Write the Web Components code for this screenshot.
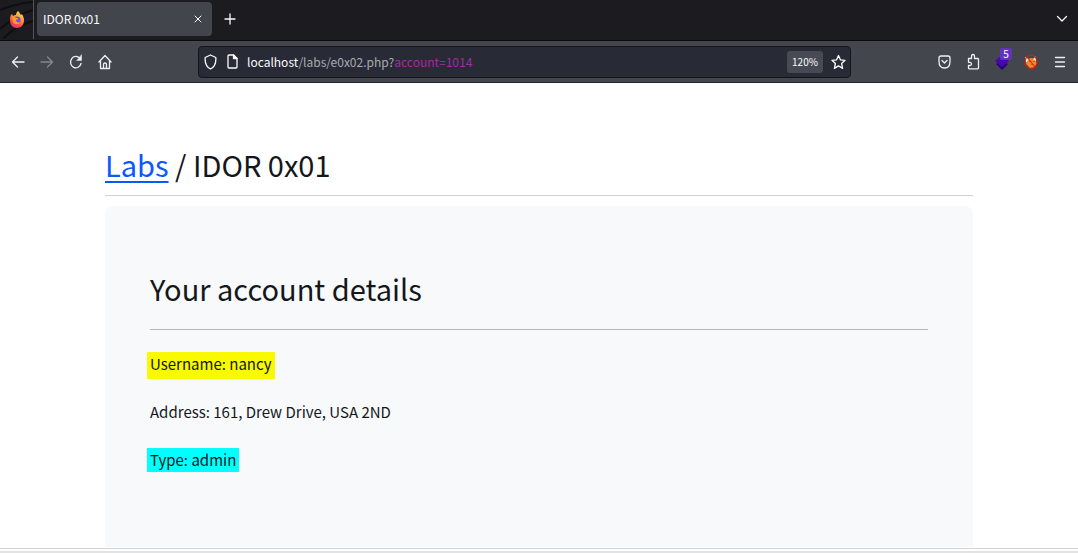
<!DOCTYPE html>
<html lang="en">
<head>
<meta charset="utf-8">
<title>IDOR 0x01</title>
<style>
  html, body { margin: 0; height: 100%; }
  body { background: #fff; color: #14171a; font-family: "Noto Sans CJK JP", "Noto Sans", sans-serif; }
</style>
</head>
<body>
<browser-window></browser-window>

<template id="icon-button-t">
  <style>
    :host { display: block; position: relative; flex: none; width: 28px; height: 30px; }
    button { display: grid; place-items: center; width: 100%; height: 100%; margin: 0; padding: 0; border: 0; background: none; color: inherit; }
    ::slotted(svg) { display: block; fill: none; stroke: currentColor; stroke-width: 1.3; stroke-linecap: round; stroke-linejoin: round; }
    .badge { position: absolute; left: 12px; top: 1px; width: 12px; height: 12px; border-radius: 2px; background: #6433bd; color: #fff; font-size: 10px; line-height: 12px; text-align: center; }
    .badge:empty { display: none; }
  </style>
  <button type="button"><slot></slot></button><span class="badge"></span>
</template>

<template id="tab-strip-t">
  <style>
    :host { display: flex; align-items: center; height: 38px; padding-bottom: 2px; border-bottom: 1px solid #0b0b0e; background: #1b1b20; color: #fbfbfe; }
    .pinned { position: relative; display: grid; place-items: center; width: 33px; height: 40px; border-right: 1px solid #55565c; }
    .tab { display: flex; align-items: center; justify-content: space-between; box-sizing: border-box; width: 175px; height: 34px; margin-left: 3px; padding-left: 6px; border-radius: 4px; background: #42454c; font-size: 12px; line-height: 20px; }
    .grow { flex: 1; }
    .new { margin-left: 4px; }
    .list { margin-right: 2px; }
    .swirl { position: absolute; left: 0; top: 0; }
    .logo { position: relative; }
  </style>
  <div class="pinned">
    <svg class="swirl" width="33" height="40" fill="none" stroke="#0f0f12" stroke-width="2"><path d="M0 11Q18 4 33 3M0 30Q16 16 33 11M3 40Q15 27 33 22"/></svg>
    <svg class="logo" width="14" height="17" viewBox="0 0 14 17">
      <defs><linearGradient id="f" x1=".8" y1="0" x2=".3" y2="1"><stop stop-color="#ffe94a"/><stop offset=".45" stop-color="#ff9329"/><stop offset=".8" stop-color="#ff3d50"/><stop offset="1" stop-color="#e92a82"/></linearGradient></defs>
      <path fill="url(#f)" d="M8 0c2 2 2 3 3 4l1-1c1 2 2 4 2 6 0 5-3 8-7 8s-7-3-7-8c0-2 0-3 1-5l1-1 1 2c1-1 2-1 3-1 0-2 1-3 2-4z"/>
      <circle cx="7" cy="9" r="3.6" fill="#7948e8"/><path fill="#ff9b2c" d="M2 6c2-1 3 0 4 1l2 0c0 1-1 2-2 2 0 2 2 3 4 2-1 3-6 3-7 0z"/>
    </svg>
  </div>
  <div class="tab"><span>IDOR 0x01</span>
    <icon-button label="Close tab"><svg width="8" height="8" viewBox="0 0 8 8" style="stroke-width:1"><path d="M1 1l6 6M7 1L1 7"/></svg></icon-button>
  </div>
  <icon-button class="new" label="New tab"><svg width="12" height="12" viewBox="0 0 12 12"><path d="M6 1v10M1 6h10"/></svg></icon-button>
  <span class="grow"></span>
  <icon-button class="list" label="List all tabs"><svg width="12" height="8" viewBox="0 0 12 8"><path d="M1.500 1.500L6 6l4.500-4.500"/></svg></icon-button>
</template>

<template id="address-bar-t">
  <style>
    :host { display: flex; align-items: center; box-sizing: border-box; height: 32px; border: 1px solid #14151b; border-radius: 4px; background: #282a36; color: #fbfbfe; }
    .site { width: 22px; }
    .url { flex: 1; min-width: 0; margin-left: 4px; overflow: hidden; outline: 0; white-space: nowrap; font-size: 12px; line-height: 24px; color: #a9aab0; }
    b { font-weight: 400; color: #fbfbfe; }
    i { font-style: normal; color: #a42aa4; }
    .zoom { flex: none; width: 36px; height: 22px; margin: 0 3px 0 0; padding: 0; border: 0; border-radius: 3px; background: #484a53; color: #fbfbfe; font: 10px/22px "Noto Sans CJK JP", "Noto Sans", sans-serif; }
    .star { width: 24px; }
  </style>
  <icon-button class="site" label="Tracking protection"><svg width="13" height="16" viewBox="0 0 13 16"><path d="M6.500 1L11.800 3.500Q12.500 12 6.500 15Q.5 12 1.200 3.500z"/></svg></icon-button>
  <icon-button class="site" label="Site information"><svg width="11" height="15" viewBox="0 0 11 15"><path d="M1 2q0-1 1-1h4.500L10 4.500V13q0 1-1 1H2q-1 0-1-1z"/><path fill="currentColor" d="M6.500 1v3.500H10z"/></svg></icon-button>
  <div class="url" role="textbox" contenteditable="true" spellcheck="false" aria-label="Address"><b>localhost</b>/labs/e0x02.php?<i>account=1014</i></div>
  <button class="zoom" type="button">120%</button>
  <icon-button class="star" label="Bookmark this page"><svg width="15" height="16" viewBox="0 0 15 16"><path d="M7.500 1.500l1.900 4.300 4.600.5-3.400 3.200 1 4.900-4.100-2.500-4.100 2.500 1-4.900L1 6.300l4.600-.5z"/></svg></icon-button>
</template>

<template id="nav-bar-t">
  <style>
    :host { display: flex; align-items: center; gap: 1px; height: 41px; padding: 0 4px; border-bottom: 1px solid #24252a; background: #43464d; color: #f0f0f3; }
    address-bar { flex: 1; margin: 0 78px; }
    .off { color: #85878d; }
  </style>
  <icon-button label="Back"><svg width="14" height="14" viewBox="0 0 14 14"><path d="M13 7H1.500M6.500 2l-5 5 5 5"/></svg></icon-button>
  <icon-button class="off" label="Forward"><svg width="14" height="14" viewBox="0 0 14 14"><path d="M1 7h11.500M7.500 2l5 5-5 5"/></svg></icon-button>
  <icon-button label="Reload"><svg width="14" height="16" viewBox="0 0 14 16"><path d="M12 9.500A5.300 5.700 0 1 1 10.700 4.200"/><path fill="currentColor" stroke-width=".5" d="M12.500 1v5.500H8z"/></svg></icon-button>
  <icon-button label="Home"><svg width="14" height="16" viewBox="0 0 14 16"><path d="M1 8l6-6.500L13 8M2.500 7v7.500h9V7M5.500 14.500v-4q0-1.500 1.500-1.500t1.500 1.500v4"/></svg></icon-button>
  <address-bar></address-bar>
  <icon-button label="Save to Pocket"><svg width="13" height="14" viewBox="0 0 13 14"><path d="M1 3q0-2 2-2h7q2 0 2 2v3.500Q12 13 6.500 13T1 6.500zM4 5.500L6.500 8 9 5.500"/></svg></icon-button>
  <icon-button label="Extensions"><svg width="13" height="17" viewBox="0 0 13 17"><path d="M1.500 7V5.500h3V3.200q0-1.700 1.500-1.700t1.500 1.700v2.300h3.300q.7 0 .7 1V15q0 .8-.8.800H2.200q-.7 0-.7-.8v-2.500h1.300q1.700 0 1.700-1.500T2.800 9.300H1.500z"/></svg></icon-button>
  <icon-button label="Wappalyzer" badge="5"><svg width="14" height="16" viewBox="0 0 14 16" style="stroke:none"><path fill="#27007c" d="M1 10l6-3 6 3-6 6z"/><path fill="#4608ad" d="M0 7l7-6 7 6-7 6z"/></svg></icon-button>
  <icon-button label="FoxyProxy"><svg width="14" height="16" viewBox="0 0 14 16" style="stroke:none"><path fill="#f08a24" d="M4 5l3-1 4 1 2 4-2 4-5 1-4-4z"/><path fill="#f4e9df" d="M1 3l4 2-3 4zM12 2l-3 3 3 2z"/><path fill="#b5641b" d="M5 7h2v1H5zM9 7h2v1H9zM7 10h2v1H7z"/><ellipse cx="7" cy="8" rx="6" ry="7" fill="none" stroke="#c9201b" stroke-width="1.200"/><path stroke="#d91f18" stroke-width="1.200" d="M3 3l8 10"/></svg></icon-button>
  <icon-button label="Application menu"><svg width="12" height="12" viewBox="0 0 12 12"><path d="M1.500 1.500h9M1.500 6h9M1.500 10.500h9"/></svg></icon-button>
</template>

<template id="account-card-t">
  <style>
    :host { display: block; padding: 55px 45px 72px; border-radius: 8px 8px 0 0; background: #f8f9fb; }
    h2 { margin: 0; padding-bottom: 14px; border-bottom: 1px solid #b5b6b8; font-size: 29px; font-weight: 400; line-height: 54px; }
    .rows { display: flex; flex-direction: column; align-items: flex-start; gap: 24px; padding-top: 22px; }
  </style>
  <h2><slot name="title"></slot></h2>
  <div class="rows"><slot></slot></div>
</template>

<template id="detail-row-t">
  <style>
    :host { display: block; margin-left: -3px; padding: 0 3px; }
    :host([mark="yellow"]) { margin-bottom: -3px; padding-bottom: 3px; background: #f9f900; }
    :host([mark="cyan"]) { background: #0ff; }
    p { margin: 0; font-size: 15px; line-height: 24px; }
  </style>
  <p><slot></slot></p>
</template>

<template id="lab-page-t">
  <style>
    :host { display: flex; flex-direction: column; flex: 1; padding: 54px 105px 0; }
    h1 { margin: 0 0 10px; padding-bottom: 4px; border-bottom: 1px solid #d0d2d4; font-size: 29px; font-weight: 400; line-height: 54px; }
    a { color: #0a58ff; text-decoration-thickness: 2px; text-underline-offset: 4px; }
    account-card { flex: 1; }
  </style>
  <h1><a href="#labs">Labs</a> / IDOR 0x01</h1>
  <account-card>
    <span slot="title">Your account details</span>
    <detail-row mark="yellow">Username: nancy</detail-row>
    <detail-row>Address: 161, Drew Drive, USA 2ND</detail-row>
    <detail-row mark="cyan">Type: admin</detail-row>
  </account-card>
</template>

<template id="browser-window-t">
  <style>
    :host { display: flex; flex-direction: column; min-height: 100%; }
    footer { height: 2px; margin-top: 1px; border-top: 1px solid #d2d2d2; border-bottom: 2px solid #e3e3e3; }
  </style>
  <tab-strip></tab-strip>
  <nav-bar></nav-bar>
  <lab-page></lab-page>
  <footer></footer>
</template>

<script>
  class TemplateElement extends HTMLElement {
    constructor() {
      super();
      const template = document.getElementById(this.localName + '-t');
      this.attachShadow({ mode: 'open' }).append(template.content.cloneNode(true));
    }
  }

  class IconButton extends TemplateElement {
    connectedCallback() {
      this.shadowRoot.querySelector('button').setAttribute('aria-label', this.getAttribute('label'));
      this.shadowRoot.querySelector('.badge').textContent = this.getAttribute('badge') || '';
    }
  }

  customElements.define('icon-button', IconButton);
  for (const name of ['tab-strip', 'address-bar', 'nav-bar', 'detail-row', 'account-card', 'lab-page', 'browser-window']) {
    customElements.define(name, class extends TemplateElement {});
  }
</script>
</body>
</html>
